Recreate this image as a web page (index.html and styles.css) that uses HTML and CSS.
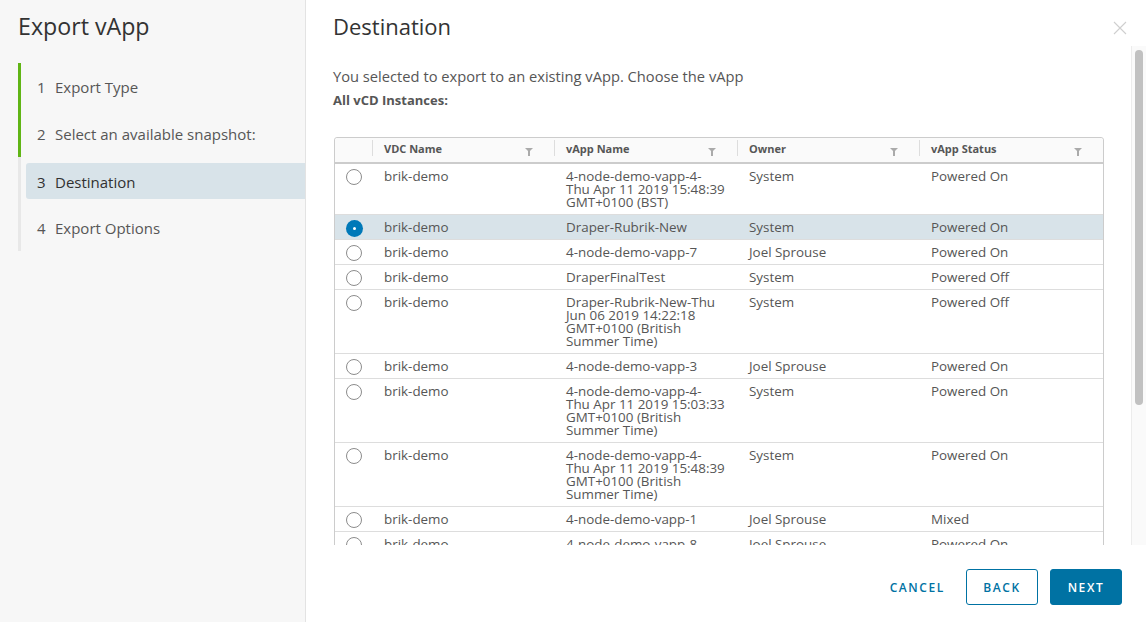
FILE: index.html
```html
<!DOCTYPE html>
<html>
<head>
<meta charset="utf-8">
<link rel="stylesheet" href="styles.css">
</head>
<body>
<div class="wizard">
  <aside class="sidebar">
    <h1 class="wiz-title">Export vApp</h1>
    <ol class="steps">
      <li class="step done"><span class="num">1</span><span class="lbl">Export Type</span></li>
      <li class="step done"><span class="num">2</span><span class="lbl">Select an available snapshot:</span></li>
      <li class="step current"><span class="num">3</span><span class="lbl">Destination</span></li>
      <li class="step"><span class="num">4</span><span class="lbl">Export Options</span></li>
    </ol>
  </aside>
  <main class="main">
    <header class="main-head">
      <h2 class="page-title">Destination</h2>
      <span class="close" aria-label="Close">
        <svg width="14" height="14" viewBox="0 0 14 14"><path d="M1 1L13 13M13 1L1 13" stroke="#cfcfcf" stroke-width="1.1" fill="none"/></svg>
      </span>
    </header>
    <div class="body-row">
      <div class="content">
        <p class="intro">You selected to export to an existing vApp. Choose the vApp</p>
        <p class="label">All vCD Instances:</p>
        <div class="grid">
          <div class="grid-head">
            <div class="hc sel"></div>
            <div class="hc">VDC Name<span class="filter"></span></div>
            <div class="hc">vApp Name<span class="filter"></span></div>
            <div class="hc">Owner<span class="filter"></span></div>
            <div class="hc">vApp Status<span class="filter"></span></div>
          </div>
          <div class="row">
            <div class="c sel"><span class="radio"></span></div>
            <div class="c">brik-demo</div>
            <div class="c">4-node-demo-vapp-4-<br>Thu Apr 11 2019 15:48:39<br>GMT+0100 (BST)</div>
            <div class="c">System</div>
            <div class="c">Powered On</div>
          </div>
          <div class="row selected">
            <div class="c sel"><span class="radio on"></span></div>
            <div class="c">brik-demo</div>
            <div class="c">Draper-Rubrik-New</div>
            <div class="c">System</div>
            <div class="c">Powered On</div>
          </div>
          <div class="row">
            <div class="c sel"><span class="radio"></span></div>
            <div class="c">brik-demo</div>
            <div class="c">4-node-demo-vapp-7</div>
            <div class="c">Joel Sprouse</div>
            <div class="c">Powered On</div>
          </div>
          <div class="row">
            <div class="c sel"><span class="radio"></span></div>
            <div class="c">brik-demo</div>
            <div class="c">DraperFinalTest</div>
            <div class="c">System</div>
            <div class="c">Powered Off</div>
          </div>
          <div class="row">
            <div class="c sel"><span class="radio"></span></div>
            <div class="c">brik-demo</div>
            <div class="c">Draper-Rubrik-New-Thu<br>Jun 06 2019 14:22:18<br>GMT+0100 (British<br>Summer Time)</div>
            <div class="c">System</div>
            <div class="c">Powered Off</div>
          </div>
          <div class="row">
            <div class="c sel"><span class="radio"></span></div>
            <div class="c">brik-demo</div>
            <div class="c">4-node-demo-vapp-3</div>
            <div class="c">Joel Sprouse</div>
            <div class="c">Powered On</div>
          </div>
          <div class="row">
            <div class="c sel"><span class="radio"></span></div>
            <div class="c">brik-demo</div>
            <div class="c">4-node-demo-vapp-4-<br>Thu Apr 11 2019 15:03:33<br>GMT+0100 (British<br>Summer Time)</div>
            <div class="c">System</div>
            <div class="c">Powered On</div>
          </div>
          <div class="row">
            <div class="c sel"><span class="radio"></span></div>
            <div class="c">brik-demo</div>
            <div class="c">4-node-demo-vapp-4-<br>Thu Apr 11 2019 15:48:39<br>GMT+0100 (British<br>Summer Time)</div>
            <div class="c">System</div>
            <div class="c">Powered On</div>
          </div>
          <div class="row">
            <div class="c sel"><span class="radio"></span></div>
            <div class="c">brik-demo</div>
            <div class="c">4-node-demo-vapp-1</div>
            <div class="c">Joel Sprouse</div>
            <div class="c">Mixed</div>
          </div>
          <div class="row">
            <div class="c sel"><span class="radio"></span></div>
            <div class="c">brik-demo</div>
            <div class="c">4-node-demo-vapp-8</div>
            <div class="c">Joel Sprouse</div>
            <div class="c">Powered On</div>
          </div>
        </div>
      </div>
      <div class="scrollbar"><div class="thumb"></div></div>
    </div>
    <footer class="footer">
      <button class="btn link">CANCEL</button>
      <button class="btn outline">BACK</button>
      <button class="btn primary">NEXT</button>
    </footer>
  </main>
</div>
</body>
</html>
```
FILE: styles.css
```css
* { box-sizing: border-box; }
html, body { margin: 0; padding: 0; }
body {
  font-family: "Open Sans", "Liberation Sans", sans-serif;
  color: #565656;
  background: #fff;
  width: 1146px;
  height: 622px;
  overflow: hidden;
}
.wizard { display: flex; height: 622px; }
.sidebar {
  width: 306px;
  flex: none;
  background: #f7f7f7;
  border-right: 1px solid #e3e3e3;
  padding: 0 0 0 18px;
}
.wiz-title {
  margin: 0;
  padding-top: 11px;
  height: 63px;
  font-size: 23.2px;
  font-weight: 400;
  color: #333;
  line-height: 30px;
}
.steps { list-style: none; margin: 0; padding: 0; }
.step {
  height: 47px;
  display: flex;
  align-items: center;
  font-size: 15px;
  color: #565656;
  border-left: 3px solid #e8e8e8;
  padding-left: 16px;
  position: relative;
}
.step.done { border-left-color: #60b515; }
.step .num { width: 18px; flex: none; }
.step.current::before {
  content: "";
  position: absolute;
  left: 5px; right: 0; top: 6px; bottom: 5px;
  background: #d8e3e9;
  border-radius: 3px 0 0 3px;
}
.step.current > span { position: relative; top: 1px; }
.step.current { color: #313131; }
.main { flex: 1; display: flex; flex-direction: column; min-width: 0; }
.main-head {
  height: 46px;
  flex: none;
  display: flex;
  justify-content: space-between;
  align-items: flex-start;
  padding: 11px 19px 0 27px;
}
.page-title {
  margin: 0;
  font-size: 22px;
  line-height: 30px;
  font-weight: 400;
  color: #333;
}
.close { margin-top: 10px; display: block; line-height: 0; }
.body-row { display: flex; height: 499px; flex: none; overflow: hidden; }
.content { flex: 1; padding: 0 28px 0 27px; overflow: hidden; }
.intro { margin: 20px 0 0; font-size: 14.7px; line-height: 20px; color: #565656; }
.label { margin: 4px 0 0; font-size: 13px; line-height: 20px; font-weight: 700; color: #565656; }
.grid {
  margin: 27px 0 0 1px;
  width: 770px;
  border: 1px solid #ccc;
  border-radius: 3px 3px 0 0;
}
.grid-head, .row {
  display: grid;
  grid-template-columns: 37px 182px 183px 182px 1fr;
}
.grid-head {
  height: 26px;
  background: #fafafa;
  border-bottom: 2px solid #ccc;
  border-radius: 3px 3px 0 0;
}
.hc {
  font-size: 11px;
  font-weight: 700;
  color: #565656;
  display: flex;
  align-items: center;
  justify-content: space-between;
  padding: 0 21px 0 11px;
  border-left: 1px solid #ddd;
  margin: 2px 0 6px;
}
.hc.sel { border-left: none; }
.filter {
  width: 0; height: 0;
  border-left: 4px solid transparent;
  border-right: 4px solid transparent;
  border-top: 4px solid #aaa;
  position: relative;
  margin-top: 3px;
}
.filter::after {
  content: "";
  position: absolute;
  left: -1px; top: -1px;
  width: 2px; height: 5px;
  background: #aaa;
}
.row { border-bottom: 1px solid #ddd; }
.row.selected { background: #d8e3e9; }
.c {
  font-size: 13.4px;
  line-height: 13px;
  padding: 6px 11px 5px 12px;
  color: #565656;
  white-space: nowrap;
}
.c.sel { padding: 5px 0 0 11px; }
.radio {
  display: block;
  width: 16px; height: 16px;
  border-radius: 50%;
  border: 1px solid #8c8c8c;
  background: #fff;
}
.radio.on {
  background: #fff;
  box-shadow: 0 0 0 1px #0079b8;
  width: 15px; height: 15px;
  margin: 0.5px;
  border: 6px solid #0079b8;
}
.scrollbar {
  width: 15px;
  flex: none;
  background: #fafafa;
  border-left: 1px solid #ececec;
  padding: 4px 3px 4px 3px;
}
.thumb {
  height: 355px;
  background: #c1c1c1;
  border-radius: 5px;
}
.footer {
  flex: 1;
  display: flex;
  justify-content: flex-end;
  align-items: flex-start;
  padding: 24px 24px 0 0;
  gap: 12px;
}
.btn {
  font-family: "Open Sans", "Liberation Sans", sans-serif;
  height: 36px;
  width: 72px;
  font-size: 12px;
  font-weight: 600;
  letter-spacing: 1.6px;
  border-radius: 3px;
  background: transparent;
  color: #0072a3;
  border: 1px solid #0072a3;
  padding: 0;
  cursor: pointer;
}
.btn.link { border-color: transparent; width: auto; padding: 0 8px; }
.btn.primary { background: #0072a3; color: #fff; }
```
